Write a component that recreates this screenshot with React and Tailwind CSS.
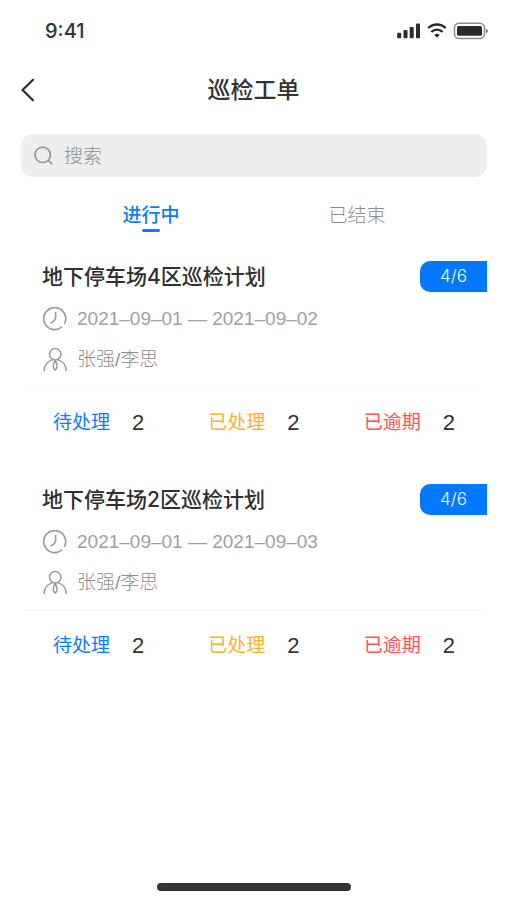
import React from "react";

const ORDERS = [
  { id: 1, title: "地下停车场4区巡检计划", progress: "4/6", dates: "2021–09–01 — 2021–09–02", people: "张强/李思", line: "border-[#fcfcfc]" },
  { id: 2, title: "地下停车场2区巡检计划", progress: "4/6", dates: "2021–09–01 — 2021–09–03", people: "张强/李思", line: "border-[#f5f5f5]" },
];

const STATS = [
  { label: "待处理", count: 2, color: "text-[#0a7cff]" },
  { label: "已处理", count: 2, color: "text-[#fbb034]" },
  { label: "已逾期", count: 2, color: "text-[#fa5555]" },
];

function StatusIcons() {
  return (
    <svg className="h-[18px] w-[92px]" viewBox="0 0 92 18" fill="none" aria-hidden="true">
      <g fill="#2b2b2b">
        <rect x="1.200" y="10.800" width="4" height="5.400" rx="1" />
        <rect x="7.500" y="8" width="4" height="8.200" rx="1" />
        <rect x="13.700" y="5" width="4" height="11.200" rx="1" />
        <rect x="20" y="1.500" width="4" height="14.700" rx="1" />
        <path d="M38.400 13a3.600 3.600 0 0 1 5.200 0L41 15.700z" />
      </g>
      <g stroke="#2b2b2b" strokeWidth="2.400">
        <path d="M32.300 6a12.400 12.400 0 0 1 17.400 0" />
        <path d="M35.400 10a7.900 7.900 0 0 1 11.200 0" />
      </g>
      <rect x="58.500" y="1.200" width="30" height="15.200" rx="4.500" stroke="#8a8a8a" strokeWidth="1.5" />
      <rect x="61" y="4" width="25" height="9.700" rx="1.500" fill="#2b2b2b" />
      <path d="M90 7v4c1.200-.4 1.800-1.100 1.800-2s-.6-1.600-1.800-2z" fill="#6b6b6b" />
    </svg>
  );
}

function BackIcon() {
  return (
    <svg className="h-6 w-[14px]" viewBox="0 0 14 24" fill="none" stroke="#2b2b2b" strokeWidth="2.2" strokeLinecap="round" strokeLinejoin="round" aria-hidden="true">
      <path d="M12 1.800L1.500 12L12 22.200" />
    </svg>
  );
}

function SearchIcon() {
  return (
    <svg className="h-5 w-5 shrink-0" viewBox="0 0 20 20" fill="none" stroke="#999999" strokeWidth="1.7" strokeLinecap="round" aria-hidden="true">
      <circle cx="8.700" cy="8.800" r="7.700" />
      <path d="M14.300 14.400L17.800 17.800" />
    </svg>
  );
}

function ClockIcon() {
  return (
    <svg className="h-6 w-6 shrink-0" viewBox="0 0 24 24" fill="none" stroke="#999999" strokeWidth="1.600" strokeLinecap="round" strokeLinejoin="round" aria-hidden="true">
      <path d="M21.600 16.400A11 11 0 1 0 18.800 20" />
      <path d="M12.600 5.500v5c0 2.200-1.700 3.900-4.600 5.400" />
    </svg>
  );
}

function PersonIcon() {
  return (
    <svg className="h-6 w-6 shrink-0" viewBox="0 0 24 24" fill="none" stroke="#999999" strokeWidth="1.500" strokeLinecap="round" strokeLinejoin="round" aria-hidden="true">
      <circle cx="12.200" cy="6.200" r="5.700" />
      <path d="M1.200 22.600c.2-5.200 3.300-9.500 8.500-11" />
      <path d="M23.200 22.600c-.2-5.200-3.300-9.500-8.500-11" />
      <path d="M12.200 12.200c-1 2-1.900 4.400-1.900 6.300c0 1.500.8 2.700 1.900 3.600c1.100-.9 1.900-2.100 1.900-3.600c0-1.900-.9-4.300-1.900-6.300z" />
    </svg>
  );
}

function OrderCard({ order }) {
  return (
    <article className="h-[223px]">
      <div className="flex h-[31px] items-center justify-between pl-[21px]">
        <h2 className="font-['Inter','Noto_Sans_CJK_SC',sans-serif] text-[21px] leading-[31px] font-medium text-[#2f2f2f]">{order.title}</h2>
        <span className="flex h-[31px] w-[67px] items-center justify-center rounded-l-[10px] bg-[#0079ff] pt-px font-['Inter','Noto_Sans_CJK_SC',sans-serif] text-[17px] font-light text-white">
          {order.progress}
        </span>
      </div>
      <div className="mt-3 flex items-center gap-[10px] pl-[22px] text-[19px] leading-[30px] text-[#a0a0a0]">
        <ClockIcon />
        <span>{order.dates}</span>
      </div>
      <div className="mt-[11px] flex items-center gap-[10px] pl-[22px] text-[19px] leading-[30px] font-light text-[#8c8c8c]">
        <PersonIcon />
        <span>{order.people}</span>
      </div>
      <div className={`mx-[3px] mt-3 border-t ${order.line}`} />
      <dl className="mt-5 grid grid-cols-3">
        {STATS.map((s) => (
          <div key={s.label} className="flex items-center gap-[22px] pl-8 leading-[30px]">
            <dt className={`text-[19px] ${s.color}`}>{s.label}</dt>
            <dd className="text-[22px] text-[#333333]">{s.count}</dd>
          </div>
        ))}
      </dl>
    </article>
  );
}

export default function App() {
  return (
    <div className="flex min-h-screen flex-col bg-white font-['Liberation_Sans','Noto_Sans_CJK_SC',sans-serif]">
      <div className="flex h-[62px] items-center justify-between pr-[19px] pl-[45px]">
        <span className="font-['Inter',sans-serif] text-[20px] font-medium text-[#333333]">9:41</span>
        <StatusIcons />
      </div>

      <header className="grid h-14 grid-cols-[1fr_auto_1fr] items-center px-[21px]">
        <button type="button" aria-label="返回" className="justify-self-start">
          <BackIcon />
        </button>
        <h1 className="pt-px text-[23px] font-medium text-[#333333]">巡检工单</h1>
      </header>

      <main className="mt-4 flex-1 pr-5 pl-[21px]">
        <label className="flex h-[43px] items-center gap-[10px] rounded-xl bg-[#eeeeee] pl-[13px]">
          <SearchIcon />
          <input
            type="search"
            aria-label="搜索"
            placeholder="搜索"
            className="min-w-0 flex-1 bg-transparent pt-1 text-[19px] font-light text-[#333333] outline-none placeholder:text-[#8f8f8f]"
          />
        </label>

        <nav className="mx-[27px] mt-[25px] grid grid-cols-2 text-[19px] leading-7">
          <button type="button" className="flex flex-col items-center font-medium text-[#0a7cff]">
            进行中
            <span className="-mt-px h-[3px] w-[18px] rounded-full bg-[#0a7cff]" />
          </button>
          <button type="button" className="flex flex-col items-center font-light text-[#8c8c8c]">
            已结束
          </button>
        </nav>

        <div className="mt-[29px]">
          {ORDERS.map((o) => (
            <OrderCard key={o.id} order={o} />
          ))}
        </div>
      </main>

      <div className="mx-auto mb-[9px] h-2 w-[194px] rounded-full bg-[#333333]" />
    </div>
  );
}
